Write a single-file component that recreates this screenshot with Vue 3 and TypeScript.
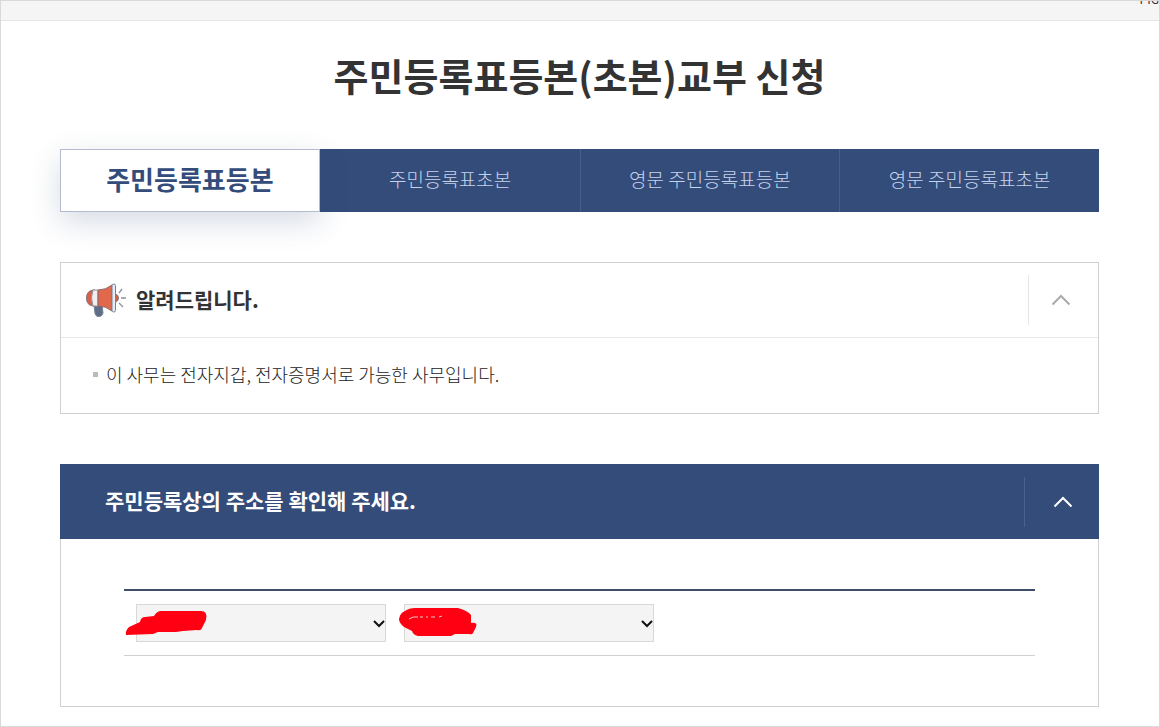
<script setup lang="ts">
import { ref } from 'vue'

const tabs = ['주민등록표등본', '주민등록표초본', '영문 주민등록표등본', '영문 주민등록표초본']
const active = ref(0)
const noticeOpen = ref(true)
const addressOpen = ref(true)
</script>

<template>
  <div class="page">
    <div class="topbar"><span>PIG</span></div>
    <main>
      <h1>주민등록표등본(초본)교부 신청</h1>
      <nav class="tabs">
        <button
          v-for="(tab, i) in tabs"
          :key="tab"
          type="button"
          :class="{ active: i === active }"
          @click="active = i"
        >{{ tab }}</button>
      </nav>

      <section class="notice">
        <header>
          <svg class="horn" width="42" height="40" viewBox="0 0 42 40" aria-hidden="true">
            <path d="M9 25h8l1 8q-1 4-5 3.500-2 0-3-3z" fill="#5f6e86" stroke="#76829a" />
            <path d="M10 10H8Q1.500 11 1.500 18T8 26h2z" fill="#d95f45" stroke="#7d7480" />
            <path d="M8 10h5v16H8Q5 18 8 10z" fill="#eef0f4" stroke="#9a8f99" />
            <path d="M13 10q8 0 14-5v26q-6-5-14-5z" fill="#e0694c" stroke="#8a6468" />
            <path d="M30.500 14q3 1 3 4t-3 4z" fill="#d95f45" stroke="#7d7480" />
            <rect x="27" y="4" width="3.500" height="28" rx="1.700" fill="#e8eaf0" stroke="#76809a" />
            <path d="M34 13l3-4M36 18h5M34 23l4 4" fill="none" stroke="#8b919e" stroke-width="1.300" />
          </svg>
          <h2>알려드립니다.</h2>
          <button type="button" class="toggle" aria-label="알림 접기" @click="noticeOpen = !noticeOpen">
            <svg width="20" height="12" viewBox="0 0 20 12"><path d="M1.500 10.500 10 2l8.500 8.500" /></svg>
          </button>
        </header>
        <ul v-if="noticeOpen">
          <li>이 사무는 전자지갑, 전자증명서로 가능한 사무입니다.</li>
        </ul>
      </section>

      <section class="address">
        <header>
          <h2>주민등록상의 주소를 확인해 주세요.</h2>
          <button type="button" class="toggle" aria-label="주소 접기" @click="addressOpen = !addressOpen">
            <svg width="20" height="12" viewBox="0 0 20 12"><path d="M1.500 10.500 10 2l8.500 8.500" /></svg>
          </button>
        </header>
        <div v-if="addressOpen" class="body">
          <div class="fields">
            <div class="field">
              <select aria-label="시도"><option></option></select>
              <svg class="arrow" width="14" height="10" viewBox="0 0 14 10"><path d="M2 2l5 5 5-5" /></svg>
              <svg class="mark" width="84" height="30" viewBox="0 0 84 30">
                <path d="M1 28Q0 24 4 20L15 15Q16 10 20 10L29 9Q32 4 36 4H76Q83 4 81 13L77 21Q76 24 72 23L58 24 51 25H33L28 27Z" />
              </svg>
            </div>
            <div class="field">
              <select aria-label="시군구"><option></option></select>
              <svg class="arrow" width="14" height="10" viewBox="0 0 14 10"><path d="M2 2l5 5 5-5" /></svg>
              <svg class="mark" width="84" height="30" viewBox="0 0 84 30">
                <path d="M7 4Q11 1 17 1H60Q70 4 73 8V16Q80 15 78 20L75 26Q74 28 71 27H57L53 29H20Q15 28 14 24L6 20Q1 16 1 12Q2 6 7 4Z" />
                <path class="gap" d="M11 12Q15 9 20 10M22 10h3M28 10h2M33 10h4M41 10l3-1" />
              </svg>
            </div>
          </div>
        </div>
      </section>
    </main>
  </div>
</template>

<style>
body {
  margin: 0;
}
</style>

<style scoped>
* {
  box-sizing: border-box;
}
.page {
  min-height: 100vh;
  border: 1px solid #d9d9d9;
  background: #fff;
  color: #333;
  font-family: "Noto Sans CJK KR", sans-serif;
}
.topbar {
  height: 20px;
  overflow: hidden;
  background: #f6f5f6;
  border-bottom: 1px solid #e6e6e6;
  font-size: 12px;
  line-height: 12px;
  text-align: right;
}
.topbar span {
  display: block;
  margin-top: -8px;
}
main {
  padding: 0 60px 19px 59px;
}
h1,
h2 {
  margin: 0;
  font-weight: 700;
}
h1 {
  padding: 24px 0 44px;
  font-size: 38px;
  line-height: 60px;
  text-align: center;
}
button {
  margin: 0;
  padding: 0;
  border: 0;
  background: none;
  font-family: inherit;
}
.tabs {
  display: grid;
  grid-template-columns: repeat(4, 1fr);
  height: 63px;
}
.tabs button {
  padding-bottom: 4px;
  background: #344c7a;
  border-left: 1px solid #475f8d;
  color: #c6d3ec;
  font-size: 19px;
  font-weight: 300;
}
.tabs .active {
  position: relative;
  background: #fff;
  border: 1px solid #b4bbd0;
  color: #344c7a;
  font-size: 26px;
  font-weight: 700;
  box-shadow: 0 10px 30px rgba(52, 76, 122, 0.2);
}
.tabs .active + button {
  border-left-color: #344c7a;
}
section {
  margin-top: 50px;
}
header {
  display: flex;
  align-items: center;
}
h2 {
  flex: 1;
  padding-bottom: 2px;
  font-size: 21px;
  line-height: 30px;
}
.toggle {
  display: flex;
  align-items: center;
  justify-content: center;
  height: 50px;
}
.toggle path {
  fill: none;
  stroke: currentColor;
  stroke-width: 2;
}
.notice {
  border: 1px solid #d0d0d0;
}
.notice header {
  height: 75px;
  padding-left: 24px;
  border-bottom: 1px solid #e8e8e8;
}
.horn {
  margin-right: 9px;
}
.notice .toggle {
  width: 70px;
  padding-right: 6px;
  border-left: 1px solid #e5e5e5;
  color: #aaa;
}
ul {
  margin: 0;
  padding: 21px 32px 24px;
  list-style: none;
}
li {
  display: flex;
  align-items: center;
  gap: 8px;
  color: #222;
  font-size: 18px;
  font-weight: 300;
  line-height: 30px;
}
li::before {
  content: "";
  width: 5px;
  height: 5px;
  background: #bbb;
}
.address header {
  height: 75px;
  padding-left: 45px;
  background: #344c7a;
  color: #fff;
}
.address h2 {
  padding-bottom: 4px;
}
.address .toggle {
  width: 75px;
  padding-left: 2px;
  border-left: 1px solid #4b628f;
  color: #fff;
}
.body {
  padding: 50px 63px;
  border: 1px solid #d0d0d0;
  border-top: 0;
}
.fields {
  display: flex;
  gap: 18px;
  padding: 13px 12px;
  border-top: 2px solid #404e68;
  border-bottom: 1px solid #d0d0d0;
}
.field {
  position: relative;
  flex: 0 1 250px;
}
select {
  display: block;
  width: 100%;
  height: 38px;
  padding: 0 20px 0 8px;
  appearance: none;
  background: #f4f4f4;
  border: 1px solid #d8d8d8;
  border-radius: 0;
  font: inherit;
}
.arrow {
  position: absolute;
  right: 0;
  top: 15px;
  fill: none;
  stroke: #111;
  stroke-width: 2;
  pointer-events: none;
}
.mark {
  position: absolute;
  left: -11px;
  top: 3px;
  fill: #ff0012;
  pointer-events: none;
}
.field + .field .mark {
  left: -6px;
}
.gap {
  fill: none;
  stroke: #f6c6c9;
}
</style>
